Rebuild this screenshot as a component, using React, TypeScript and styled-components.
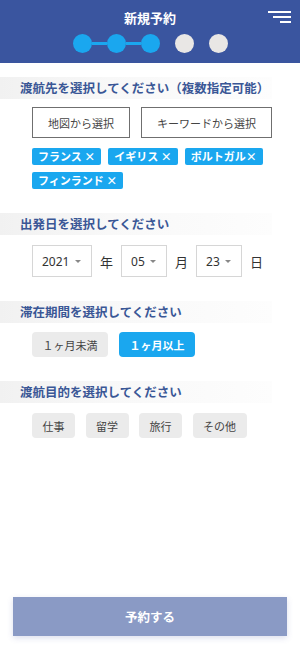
import React from "react";
import styled, { createGlobalStyle } from "styled-components";

const Global = createGlobalStyle`
  html, body { margin: 0; padding: 0; background: #ffffff; }
  body { font-family: "Noto Sans CJK JP", "Noto Sans", sans-serif; }
  * { box-sizing: border-box; }
`;

const Page = styled.div`
  width: 300px;
  height: 649px;
  display: flex;
  flex-direction: column;
  background: #fff;
  overflow: hidden;
`;

const Header = styled.header`
  position: relative;
  height: 63px;
  background: #3a559f;
  display: flex;
  flex-direction: column;
  align-items: center;
  padding-top: 9px;
`;

const Title = styled.h1`
  margin: 0;
  font-size: 13px;
  line-height: 18px;
  font-weight: 700;
  color: #fff;
`;

const Menu = styled.div`
  position: absolute;
  top: 11px;
  right: 9px;
  width: 23px;
  display: flex;
  flex-direction: column;
  align-items: flex-end;
  gap: 3.5px;
`;

const MenuLine = styled.span<{ $w: number }>`
  display: block;
  height: 1.5px;
  width: ${(p) => p.$w}px;
  background: #fff;
`;

const Steps = styled.div`
  margin-top: 7px;
  display: flex;
  align-items: center;
`;

const Dot = styled.span<{ $on: boolean }>`
  width: 19px;
  height: 19px;
  border-radius: 50%;
  background: ${(p) => (p.$on ? "#1aa7ef" : "#e9e7e5")};
`;

const Link = styled.span<{ $on: boolean }>`
  width: 15px;
  height: 3px;
  background: ${(p) => (p.$on ? "#1aa7ef" : "transparent")};
`;

const Main = styled.main`
  flex: 1;
  padding-top: 14px;
  display: flex;
  flex-direction: column;
  gap: 24px;
`;

const Section = styled.section`
  display: flex;
  flex-direction: column;
`;

const Heading = styled.h2`
  margin: 0;
  width: 272px;
  height: 22px;
  line-height: 22px;
  padding-left: 20px;
  font-size: 12.5px;
  font-weight: 700;
  color: #3a5796;
  white-space: nowrap;
  background: linear-gradient(90deg, #f1f1f1 0%, #f8f8f8 40%, #fdfdfd 100%);
`;

const Body = styled.div<{ $mt: number }>`
  padding-left: 32px;
  margin-top: ${(p) => p.$mt}px;
  display: flex;
  flex-direction: column;
  gap: 10px;
`;

const Row = styled.div<{ $gap: number }>`
  display: flex;
  align-items: center;
  gap: ${(p) => p.$gap}px;
`;

const OutlineButton = styled.button`
  height: 31px;
  padding: 0 15px;
  border: 1px solid #6f6f6f;
  background: #fff;
  color: #444;
  font-family: inherit;
  font-size: 11px;
  cursor: pointer;
`;

const Tags = styled.div`
  display: flex;
  flex-wrap: wrap;
  gap: 7px 7px;
  width: 240px;
`;

const Tag = styled.span`
  height: 17px;
  line-height: 17px;
  padding: 0 6px;
  border-radius: 2px;
  background: #1aa7ef;
  color: #fff;
  font-size: 11px;
  font-weight: 700;
  white-space: nowrap;
`;

const Select = styled.div<{ $w: number }>`
  width: ${(p) => p.$w}px;
  height: 32px;
  border: 1px solid #d6d6d6;
  display: flex;
  align-items: center;
  justify-content: space-between;
  padding: 0 10px 0 9px;
  font-size: 12px;
  color: #333;
  font-family: "Noto Sans", "Noto Sans CJK JP", sans-serif;
`;

const Caret = styled.span`
  width: 0;
  height: 0;
  border-left: 3px solid transparent;
  border-right: 3px solid transparent;
  border-top: 3px solid #888;
`;

const Unit = styled.span`
  font-size: 13px;
  color: #333;
`;

const Choice = styled.button<{ $on?: boolean }>`
  height: 25px;
  padding: 0 10.5px;
  border: none;
  border-radius: 4px;
  background: ${(p) => (p.$on ? "#1aa7ef" : "#ebebeb")};
  color: ${(p) => (p.$on ? "#fff" : "#444")};
  font-weight: ${(p) => (p.$on ? 700 : 400)};
  font-family: inherit;
  font-size: 11px;
  cursor: pointer;
`;

const Footer = styled.footer`
  padding: 0 13px 13px;
`;

const Submit = styled.button`
  width: 100%;
  height: 39px;
  border: none;
  background: #8a9ac5;
  color: #fff;
  font-family: inherit;
  font-size: 12.5px;
  font-weight: 700;
  box-shadow: 0 2px 6px rgba(60, 80, 160, 0.18);
  cursor: pointer;
`;

const steps = [true, true, true, false, false];

export default function App() {
  return (
    <Page>
      <Global />
      <Header>
        <Title>新規予約</Title>
        <Menu>
          <MenuLine $w={23} />
          <MenuLine $w={18} />
          <MenuLine $w={11} />
        </Menu>
        <Steps>
          {steps.map((on, i) => (
            <React.Fragment key={i}>
              {i > 0 && <Link $on={on && steps[i - 1]} />}
              <Dot $on={on} />
            </React.Fragment>
          ))}
        </Steps>
      </Header>
      <Main>
        <Section>
          <Heading>渡航先を選択してください（複数指定可能）</Heading>
          <Body $mt={8}>
            <Row $gap={11}>
              <OutlineButton>地図から選択</OutlineButton>
              <OutlineButton>キーワードから選択</OutlineButton>
            </Row>
            <Tags>
              <Tag>フランス ×</Tag>
              <Tag>イギリス ×</Tag>
              <Tag>ポルトガル×</Tag>
              <Tag>フィンランド ×</Tag>
            </Tags>
          </Body>
        </Section>
        <Section>
          <Heading>出発日を選択してください</Heading>
          <Body $mt={10}>
            <Row $gap={8}>
              <Select $w={60}>
                <span>2021</span>
                <Caret />
              </Select>
              <Unit>年</Unit>
              <Select $w={46}>
                <span>05</span>
                <Caret />
              </Select>
              <Unit>月</Unit>
              <Select $w={46}>
                <span>23</span>
                <Caret />
              </Select>
              <Unit>日</Unit>
            </Row>
          </Body>
        </Section>
        <Section>
          <Heading>滞在期間を選択してください</Heading>
          <Body $mt={9}>
            <Row $gap={11}>
              <Choice>１ヶ月未満</Choice>
              <Choice $on>１ヶ月以上</Choice>
            </Row>
          </Body>
        </Section>
        <Section>
          <Heading>渡航目的を選択してください</Heading>
          <Body $mt={10}>
            <Row $gap={10.5}>
              <Choice>仕事</Choice>
              <Choice>留学</Choice>
              <Choice>旅行</Choice>
              <Choice>その他</Choice>
            </Row>
          </Body>
        </Section>
      </Main>
      <Footer>
        <Submit>予約する</Submit>
      </Footer>
    </Page>
  );
}
